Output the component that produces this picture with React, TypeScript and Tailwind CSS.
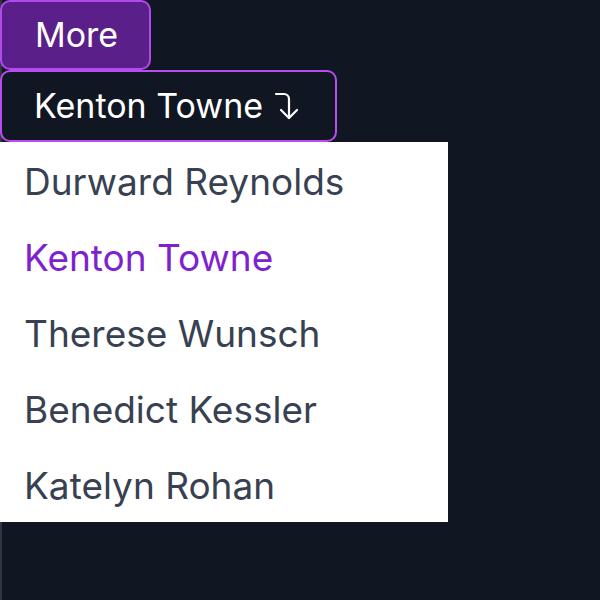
import React from "react";

const people = [
  { name: "Durward Reynolds", active: false },
  { name: "Kenton Towne", active: true },
  { name: "Therese Wunsch", active: false },
  { name: "Benedict Kessler", active: false },
  { name: "Katelyn Rohan", active: false },
];

export default function App() {
  return (
    <div
      className="relative min-h-[600px] w-[600px] bg-[#101722]"
      style={{ fontFamily: "Inter, 'Noto Sans', sans-serif" }}
    >
      <div className="absolute left-0 top-0 h-full w-[2px] bg-[#2f3542]" />
      <div className="relative flex flex-col items-start">
        <button className="flex h-[70px] w-[151px] items-center rounded-[10px] border-2 border-[#b049ee] bg-[#5a1f88] px-[33px] text-[34px] leading-10 text-white">
          More
        </button>
        <button className="flex h-[72px] w-[337px] items-center gap-[10px] rounded-[10px] border-2 border-[#b94cf2] bg-[#101722] px-[32px] text-[34px] leading-10 text-white">
          <span>Kenton Towne</span>
          <svg width="26" height="30" viewBox="0 0 26 30" fill="none" stroke="currentColor" strokeWidth="2.2" strokeLinecap="round" strokeLinejoin="round">
            <path d="M3 3h8a5 5 0 0 1 5 5v19" />
            <path d="M8 19l8 8 8-8" />
          </svg>
        </button>
        <ul className="w-[448px] bg-white">
          {people.map((p) => (
            <li
              key={p.name}
              className={`flex h-[76px] items-center px-6 pt-[3px] text-[37px] leading-10 ${
                p.active ? "text-[#7e22ce]" : "text-[#374151]"
              }`}
            >
              {p.name}
            </li>
          ))}
        </ul>
      </div>
    </div>
  );
}
